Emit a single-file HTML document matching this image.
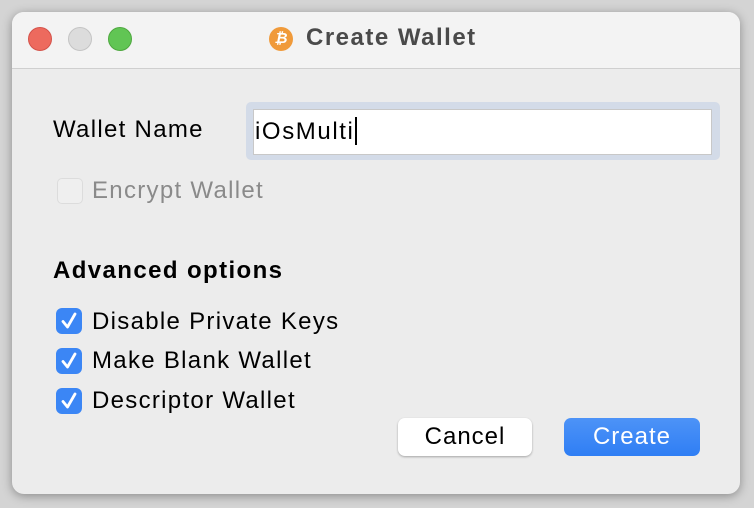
<!DOCTYPE html>
<html><head><style>
body{margin:0;width:754px;height:508px;background:#d4d4d4;font-family:"Liberation Sans",sans-serif;position:relative;overflow:hidden}
.win{position:absolute;left:12px;top:12px;width:728px;height:482px;background:#ececec;border-radius:12px;box-shadow:0 2px 10px rgba(0,0,0,.35);overflow:hidden}
.tb{position:absolute;left:0;top:0;width:728px;height:56px;background:#f3f3f3;border-bottom:1px solid #cfcfcf}
.dot{position:absolute;top:15px;width:24px;height:24px;border-radius:50%;box-sizing:border-box}
.t{position:absolute;font-size:24px;color:#000;white-space:nowrap;letter-spacing:1.3px}
.cb{position:absolute;left:44px;width:26px;height:26px;border-radius:6px;background:#3b86f5}
.cb svg{position:absolute;left:4px;top:4px}
.btn{position:absolute;top:406px;height:38px;border-radius:7px;font-size:24px;text-align:center;line-height:38px;letter-spacing:1px}
</style></head><body>
<div class="win">
<div class="tb">
<div class="dot" style="left:16px;background:#ed6a5e;border:1px solid #d4524a"></div>
<div class="dot" style="left:56px;background:#dcdcdc;border:1px solid #c4c4c4"></div>
<div class="dot" style="left:96px;background:#61c554;border:1px solid #4ea83f"></div>
<div style="position:absolute;left:257px;top:15px;width:24px;height:24px;border-radius:50%;background:#f09a3a;color:#fff;font-weight:bold;font-size:15px;text-align:center;line-height:24px;font-style:italic">₿</div>
<div class="t" style="left:294px;top:12px;font-weight:bold;color:#4a4a4a;font-size:24px;letter-spacing:1.5px">Create Wallet</div>
</div>
<div class="t" style="left:41px;top:104px">Wallet Name</div>
<div style="position:absolute;left:234px;top:90px;width:474px;height:58px;background:#d3dbe8;border-radius:5px"></div>
<div style="position:absolute;left:241px;top:97px;width:459px;height:46px;background:#fff;border:1px solid #c8c8c8;box-sizing:border-box"></div>
<div class="t" style="left:243px;top:105px;font-size:24px;letter-spacing:1.6px">iOsMulti<span style="display:inline-block;width:2px;height:28px;background:#000;vertical-align:-6px;margin-left:1px"></span></div>
<div style="position:absolute;left:45px;top:166px;width:24px;height:24px;border-radius:5px;background:#efefef;border:1px solid #dcdcdc"></div>
<div class="t" style="left:80px;top:165px;color:#8a8a8a">Encrypt Wallet</div>
<div class="t" style="left:41px;top:245px;font-weight:bold;letter-spacing:1.4px">Advanced options</div>
<div class="cb" style="top:296px"><svg width="18" height="18"><path d="M3 9.5 L7.5 15 L15 2" stroke="#fff" stroke-width="2.8" fill="none" stroke-linecap="round" stroke-linejoin="round"/></svg></div>
<div class="t" style="left:80px;top:296px">Disable Private Keys</div>
<div class="cb" style="top:336px"><svg width="18" height="18"><path d="M3 9.5 L7.5 15 L15 2" stroke="#fff" stroke-width="2.8" fill="none" stroke-linecap="round" stroke-linejoin="round"/></svg></div>
<div class="t" style="left:80px;top:335px">Make Blank Wallet</div>
<div class="cb" style="top:376px"><svg width="18" height="18"><path d="M3 9.5 L7.5 15 L15 2" stroke="#fff" stroke-width="2.8" fill="none" stroke-linecap="round" stroke-linejoin="round"/></svg></div>
<div class="t" style="left:80px;top:375px">Descriptor Wallet</div>
<div class="btn" style="left:386px;width:134px;background:#fff;box-shadow:0 1px 2px rgba(0,0,0,.3)">Cancel</div>
<div class="btn" style="left:552px;width:136px;background:linear-gradient(#4d93f7,#2f7ef4);color:#fff">Create</div>
</div>
</body></html>
